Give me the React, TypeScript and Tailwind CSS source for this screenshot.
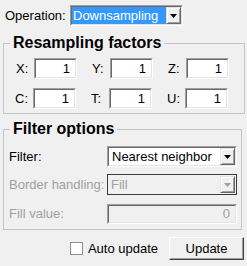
import React from "react";

const font = { fontFamily: '"Liberation Sans", Arial, sans-serif' };

function Sunken({ className = "", inner = "bg-white", children }: { className?: string; inner?: string; children?: React.ReactNode }) {
  return (
    <div className={`border border-t-[#a0a0a0] border-l-[#a0a0a0] border-b-white border-r-white ${className}`}>
      <div className={`w-full h-full border border-t-[#696969] border-l-[#696969] border-b-[#e3e3e3] border-r-[#e3e3e3] ${inner}`}>
        {children}
      </div>
    </div>
  );
}

function Arrow({ disabled = false }: { disabled?: boolean }) {
  return (
    <div className="w-[15px] h-full flex items-center justify-center bg-[#f0f0f0] border border-t-[#e3e3e3] border-l-[#e3e3e3] border-b-[#696969] border-r-[#696969] shadow-[inset_1px_1px_0_#ffffff,inset_-1px_-1px_0_#a0a0a0]">
      <svg width="7" height="4" viewBox="0 0 7 4">
        <path d="M0 0H7L3.5 4Z" fill={disabled ? "#a0a0a0" : "#000"} />
      </svg>
    </div>
  );
}

function NumBox({ label, value }: { label: string; value: string }) {
  return (
    <div className="flex items-center w-[76px]">
      <span className="w-[18px]">{label}</span>
      <Sunken className="w-[43px] h-[21px]">
        <div className="h-full flex items-center justify-end pr-[5px]">{value}</div>
      </Sunken>
    </div>
  );
}

export default function App() {
  return (
    <div className="w-[247px] h-[266px] bg-[#f0f0f0] text-[13px] text-black overflow-hidden" style={font}>
      <div className="flex items-center pt-[5px] pl-[5px]">
        <span className="w-[65px]">Operation:</span>
        <Sunken className="w-[113px] h-[21px]">
          <div className="flex h-full">
            <div className="flex-1 bg-[#3399ff] text-white flex items-center pl-[1px]">Downsampling</div>
            <Arrow />
          </div>
        </Sunken>
      </div>

      <fieldset className="mx-[3px] mt-[8px] p-0 border border-[#c4c4c4] w-[239px]">
        <legend className="ml-[6px] px-[3px] text-[16px] font-bold leading-[18px]">Resampling factors</legend>
        <div className="flex flex-col gap-[9px] pt-[6px] pl-[12px] pb-[4px]">
          <div className="flex">
            <NumBox label="X:" value="1" />
            <NumBox label="Y:" value="1" />
            <NumBox label="Z:" value="1" />
          </div>
          <div className="flex -ml-[1px]">
            <NumBox label="C:" value="1" />
            <NumBox label="T:" value="1" />
            <NumBox label="U:" value="1" />
          </div>
        </div>
      </fieldset>

      <fieldset className="mx-[3px] mt-[6px] p-0 border border-[#c4c4c4] w-[239px]">
        <legend className="ml-[6px] px-[3px] text-[16px] font-bold leading-[18px]">Filter options</legend>
        <div className="flex flex-col pt-[8px] pl-[5px] pb-[5px]">
          <div className="flex items-center h-[21px]">
            <span className="w-[98px]">Filter:</span>
            <Sunken className="w-[130px] h-[21px]">
              <div className="flex h-full">
                <div className="flex-1 flex items-center pl-[3px]">Nearest neighbor</div>
                <Arrow />
              </div>
            </Sunken>
          </div>
          <div className="flex items-center h-[21px] mt-[7px]">
            <span className="w-[98px] text-[#a0a0a0]">Border handling:</span>
            <div className="w-[130px] h-[21px] border border-[#3c3c3c] bg-[#f0f0f0] p-[1px]">
              <div className="flex h-full">
                <div className="flex-1 flex items-center pl-[2px] text-[#a0a0a0]">Fill</div>
                <Arrow disabled />
              </div>
            </div>
          </div>
          <div className="flex items-center h-[20px] mt-[9px]">
            <span className="w-[98px] text-[#a0a0a0]">Fill value:</span>
            <Sunken className="w-[130px] h-[20px]" inner="bg-[#f0f0f0]">
              <div className="h-full flex items-center justify-end pr-[5px] text-[#a0a0a0]">0</div>
            </Sunken>
          </div>
        </div>
      </fieldset>

      <div className="flex items-center justify-end pr-[3px] mt-[7px]">
        <div className="w-[13px] h-[13px] bg-white border border-[#8f8f8f]"></div>
        <span className="ml-[5px] mr-[11px]">Auto update</span>
        <button className="w-[75px] h-[23px] bg-[#f0f0f0] border border-t-white border-l-white border-b-[#404040] border-r-[#404040] shadow-[inset_-1px_-1px_0_#a0a0a0] flex items-center justify-center">
          Update
        </button>
      </div>
    </div>
  );
}
